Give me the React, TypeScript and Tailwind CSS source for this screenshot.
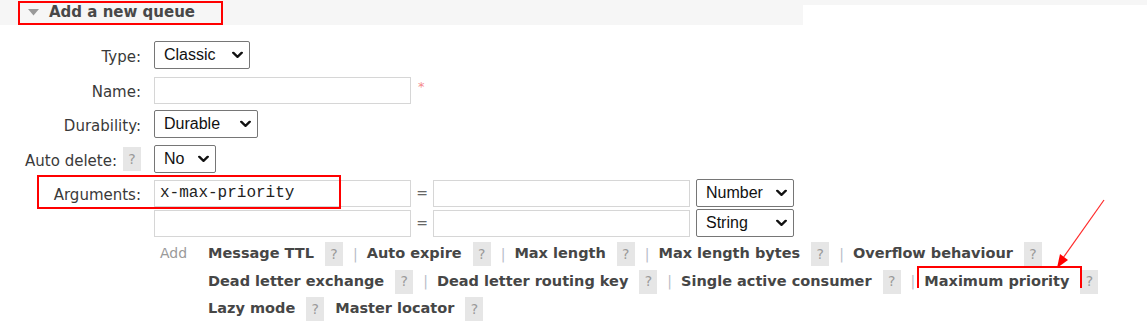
import React from "react";

function Help() {
  return (
    <span className="inline-flex items-center justify-center w-[18px] h-[24px] bg-[#e6e6e6] text-[#9a9a9a] text-[14px] font-normal">
      ?
    </span>
  );
}

function Chevron() {
  return (
    <svg width="11" height="7" viewBox="0 0 11 7" className="pointer-events-none absolute right-[7px] top-1/2 -translate-y-1/2">
      <path d="M1.2 1.2 L5.5 5.3 L9.8 1.2" fill="none" stroke="#111" strokeWidth="2.3" strokeLinecap="round" strokeLinejoin="round" />
    </svg>
  );
}

function Select({ value, options, w }: { value: string; options: string[]; w: string }) {
  return (
    <span className={`relative flex h-[28px] ${w}`}>
      <select
        defaultValue={value}
        className="appearance-none w-full h-full border border-[#767676] rounded-[2px] bg-white pl-[9px] text-[16px] text-[#111] font-['Liberation_Sans',Arial,sans-serif]"
      >
        {options.map((o) => (
          <option key={o}>{o}</option>
        ))}
      </select>
      <Chevron />
    </span>
  );
}

function TextInput({ value = "" }: { value?: string }) {
  return (
    <input
      defaultValue={value}
      className="w-[257px] h-[27px] border border-[#d6d6d6] bg-white px-[5px] text-[16px] text-[#222] font-['Liberation_Mono','Courier_New',monospace]"
    />
  );
}

function Row({ label, children, help }: { label: string; children: React.ReactNode; help?: boolean }) {
  return (
    <div className="flex items-center h-[28px]">
      <div className="w-[141px] flex justify-end items-center text-[15px] leading-[20px] text-[#3a3a3a] pt-[3px]">
        <span>{label}</span>
        {help && (
          <span className="ml-[6px] -mt-[3px] flex">
            <Help />
          </span>
        )}
      </div>
      <div className="ml-[13px] flex items-center">{children}</div>
    </div>
  );
}

type Item = { t: string; sep?: boolean };

function LinkRow({ items }: { items: Item[] }) {
  return (
    <div className="flex items-center h-[24px]">
      {items.map((it, i) => (
        <React.Fragment key={it.t}>
          {i > 0 && it.sep && <span className="ml-[10px] text-[#b8bcc8] text-[14px] font-normal">|</span>}
          <span
            className={`${i > 0 ? (it.sep ? "ml-[9px]" : "ml-[11px]") : ""} font-bold text-[14.5px] text-[#464646] whitespace-nowrap`}
          >
            {it.t}
          </span>
          <span className="ml-[11px] flex">
            <Help />
          </span>
        </React.Fragment>
      ))}
    </div>
  );
}

export default function App() {
  return (
    <div className="relative w-[1147px] h-[326px] bg-white overflow-hidden font-['DejaVu_Sans',Verdana,sans-serif]">
      {/* header */}
      <div className="flex items-start">
        <div className="w-[803px] h-[25px] bg-[#f6f6f6] flex items-center">
          <div className="ml-[18px] h-[24px] w-[205px] border-2 border-[#ff0000] flex items-center">
            <svg width="11" height="7" viewBox="0 0 11 7" className="ml-[8px]">
              <path d="M0 0 H11 L5.5 6.5 Z" fill="#9a9a9a" />
            </svg>
            <span className="ml-[10px] font-bold text-[15px] text-[#484848] leading-none">Add a new queue</span>
          </div>
        </div>
        <div className="flex-1 h-[5px] bg-[#f6f6f6]" />
      </div>

      {/* form */}
      <div className="mt-[16px] flex flex-col">
        <Row label="Type:">
          <Select value="Classic" options={["Classic", "Quorum", "Stream"]} w="w-[96px]" />
        </Row>
        <div className="mt-[7px]">
          <Row label="Name:">
            <input className="w-[257px] h-[27px] border border-[#d6d6d6] bg-white" />
            <span className="ml-[7px] -mt-[6px] text-[#f58a8a] text-[13px]">*</span>
          </Row>
        </div>
        <div className="mt-[6px]">
          <Row label="Durability:">
            <Select value="Durable" options={["Durable", "Transient"]} w="w-[104px]" />
          </Row>
        </div>
        <div className="mt-[7px]">
          <Row label="Auto delete:" help>
            <Select value="No" options={["No", "Yes"]} w="w-[62px]" />
          </Row>
        </div>
        <div className="mt-[6px]">
          <Row label="Arguments:">
            <TextInput value="x-max-priority" />
            <span className="w-[22px] text-center text-[14px] text-[#666]">=</span>
            <TextInput />
            <span className="ml-[6px] flex">
              <Select value="Number" options={["String", "Number", "Boolean", "List"]} w="w-[98px]" />
            </span>
          </Row>
        </div>
        <div className="mt-[2px]">
          <Row label="">
            <TextInput />
            <span className="w-[22px] text-center text-[14px] text-[#666]">=</span>
            <TextInput />
            <span className="ml-[6px] flex">
              <Select value="String" options={["String", "Number", "Boolean", "List"]} w="w-[98px]" />
            </span>
          </Row>
        </div>

        {/* add links */}
        <div className="mt-[5px] flex">
          <div className="w-[160px] shrink-0" />
          <div className="w-[48px] shrink-0 text-[14px] text-[#9a9a9a] pt-[1px]">Add</div>
          <div className="flex flex-col gap-[3.5px]">
            <LinkRow
              items={[
                { t: "Message TTL" },
                { t: "Auto expire", sep: true },
                { t: "Max length", sep: true },
                { t: "Max length bytes", sep: true },
                { t: "Overflow behaviour", sep: true },
              ]}
            />
            <LinkRow
              items={[
                { t: "Dead letter exchange" },
                { t: "Dead letter routing key", sep: true },
                { t: "Single active consumer", sep: true },
                { t: "Maximum priority", sep: true },
              ]}
            />
            <LinkRow items={[{ t: "Lazy mode" }, { t: "Master locator" }]} />
          </div>
        </div>
      </div>

      {/* annotations */}
      <div className="absolute left-[37px] top-[175px] w-[304px] h-[34px] border-2 border-[#ff0000]" />
      <div className="absolute left-[917px] top-[266px] w-[165px] h-[22px] border-2 border-b-0 border-[#ff0000]" />
      <svg className="absolute left-0 top-0 pointer-events-none" width="1147" height="326">
        <line x1="1104" y1="200" x2="1063" y2="258" stroke="#ff2a2a" strokeWidth="1.2" />
        <path d="M1057 268 L1060 254 L1068 260 Z" fill="#ff0000" />
      </svg>
    </div>
  );
}
